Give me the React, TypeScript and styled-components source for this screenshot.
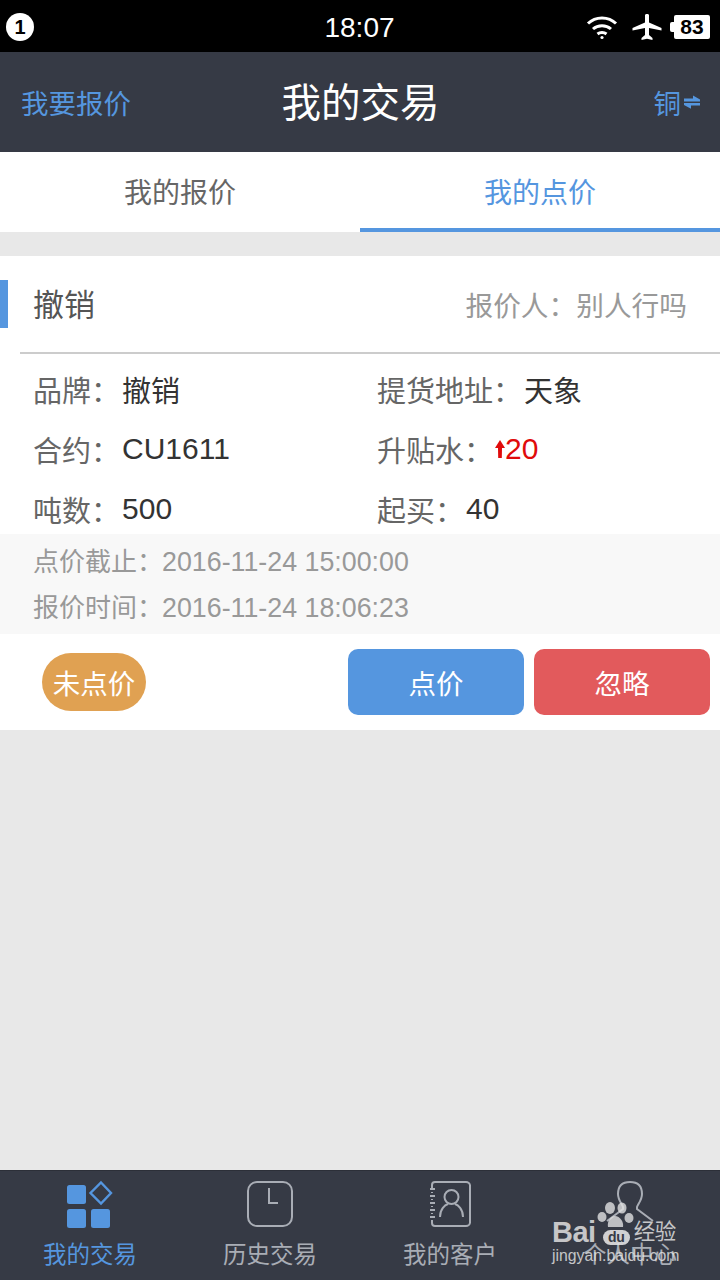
import React from "react";
import styled, { createGlobalStyle } from "styled-components";

const BLUE = "#5596df";
const DARK = "#363a45";

const GlobalStyle = createGlobalStyle`
	html, body {
		margin: 0;
		padding: 0;
		background: #e8e8e8;
		font-family: "Liberation Sans", "Noto Sans CJK SC", sans-serif;
	}
	* {
		box-sizing: border-box;
	}
`;

const Page = styled.div`
	position: relative;
	width: 720px;
	height: 1280px;
	display: flex;
	flex-direction: column;
	overflow: hidden;
	background: #e8e8e8;
`;

const StatusBar = styled.div`
	height: 52px;
	flex: none;
	background: #000;
	color: #fff;
	display: grid;
	grid-template-columns: 1fr auto 1fr;
	align-items: center;
	padding: 0 10px 0 6px;
`;

const Notice = styled.div`
	width: 28px;
	height: 28px;
	border-radius: 50%;
	background: #fff;
	color: #000;
	font-size: 20px;
	font-weight: 700;
	display: flex;
	align-items: center;
	justify-content: center;
`;

const Clock = styled.div`
	font-size: 28px;
	line-height: 52px;
	padding: 2px 0 0 3px;
`;

const StatusIcons = styled.div`
	display: flex;
	align-items: center;
	justify-content: flex-end;
	gap: 8px;
	svg:first-child {
		margin-right: 6px;
	}
`;

const Battery = styled.div`
	position: relative;
	width: 36px;
	height: 24px;
	margin-left: 4px;
	border-radius: 2px;
	background: #fff;
	color: #000;
	font-size: 21px;
	font-weight: 700;
	line-height: 24px;
	text-align: center;
	&::before {
		content: "";
		position: absolute;
		left: -4px;
		top: 7px;
		width: 4px;
		height: 10px;
		background: #fff;
		border-radius: 2px 0 0 2px;
	}
`;

const NavBar = styled.div`
	height: 100px;
	flex: none;
	background: ${DARK};
	display: grid;
	grid-template-columns: 1fr auto 1fr;
	align-items: center;
	padding: 0 20px 0 21px;
`;

const NavLink = styled.div<{ $right?: boolean }>`
	color: ${BLUE};
	font-size: 27.500px;
	display: flex;
	align-items: center;
	gap: 3px;
	justify-content: ${(p) => (p.$right ? "flex-end" : "flex-start")};
`;

const NavTitle = styled.div`
	color: #fff;
	font-size: 39.500px;
	margin-bottom: 5px;
`;

const Tabs = styled.div`
	height: 80px;
	flex: none;
	background: #fff;
	display: flex;
`;

const Tab = styled.div<{ $active?: boolean }>`
	flex: 1;
	display: flex;
	align-items: center;
	justify-content: center;
	padding-top: 2px;
	font-size: 28px;
	color: ${(p) => (p.$active ? BLUE : "#666")};
	border-bottom: 4px solid ${(p) => (p.$active ? BLUE : "transparent")};
`;

const Card = styled.div`
	margin-top: 24px;
	background: #fff;
	display: flex;
	flex-direction: column;
`;

const CardHeader = styled.div`
	height: 96px;
	display: flex;
	align-items: center;
	justify-content: space-between;
	padding-right: 33px;
`;

const HeaderTitle = styled.div`
	height: 48px;
	border-left: 8px solid ${BLUE};
	padding-left: 25px;
	font-size: 31px;
	line-height: 52px;
	color: #555;
`;

const Quoter = styled.div`
	font-size: 27.700px;
	color: #999;
`;

const Divider = styled.div`
	height: 2px;
	margin-left: 20px;
	background: #ccc;
`;

const Fields = styled.div`
	display: grid;
	grid-template-columns: 344px 1fr;
	grid-auto-rows: 60px;
	padding: 5px 0 0 33px;
	height: 180px;
`;

const Field = styled.div`
	display: flex;
	align-items: center;
	font-size: 29px;
	color: #666;
	white-space: pre;
	height: 60px;
`;

const Value = styled.span<{ $red?: boolean; $cjk?: boolean }>`
	color: ${(p) => (p.$red ? "#e00b0b" : "#333")};
	font-size: ${(p) => (p.$cjk ? 29 : 30)}px;
	margin-left: 2px;
	display: inline-flex;
	align-items: center;
`;

const Meta = styled.div`
	height: 100px;
	background: #f8f8f8;
	padding: 5px 33px;
`;

const MetaRow = styled.div`
	height: 46px;
	line-height: 46px;
	font-size: 26px;
	color: #999;
	white-space: pre;
`;

const MetaDate = styled.span`
	font-size: 26.800px;
	margin-left: -1px;
`;

const Actions = styled.div`
	height: 96px;
	display: flex;
	align-items: center;
	padding: 0 10px 0 42px;
`;

const StatusPill = styled.div`
	width: 104px;
	height: 58px;
	border-radius: 29px;
	background: #e0a152;
	color: #fff;
	font-size: 27.500px;
	display: flex;
	align-items: center;
	justify-content: center;
	margin-right: auto;
`;

const ActionButton = styled.div<{ $color: string }>`
	width: 176px;
	height: 66px;
	margin-left: 10px;
	border-radius: 10px;
	background: ${(p) => p.$color};
	color: #fff;
	font-size: 27.500px;
	display: flex;
	align-items: center;
	justify-content: center;
`;

const Spacer = styled.div`
	flex: 1;
`;

const TabBar = styled.div`
	height: 110px;
	flex: none;
	background: ${DARK};
	border-top: 1px solid #2c2f38;
	display: grid;
	grid-template-columns: repeat(4, 180px);
`;

const TabItem = styled.div<{ $active?: boolean }>`
	display: flex;
	flex-direction: column;
	align-items: center;
	padding-top: 9px;
	font-size: 23.500px;
	line-height: 34px;
	color: ${(p) => (p.$active ? BLUE : "#a9adb5")};
	svg {
		display: block;
		height: 50px;
		width: 50px;
		margin-bottom: 8px;
		overflow: visible;
	}
`;

const Watermark = styled.div`
	position: absolute;
	left: 552px;
	top: 1199px;
	width: 130px;
	height: 72px;
	color: rgba(225, 225, 225, 0.85);
	pointer-events: none;
`;

const WatermarkPaw = styled.svg`
	position: absolute;
	left: 45px;
	top: 3px;
	width: 38px;
	height: 27px;
`;

const WatermarkBrand = styled.div`
	position: absolute;
	left: 0;
	top: 18px;
	width: 130px;
	font-size: 29px;
	font-weight: 700;
	line-height: 30px;
	letter-spacing: -0.5px;
	white-space: nowrap;
	display: flex;
	align-items: center;
`;

const WatermarkDu = styled.span`
	width: 27px;
	height: 15px;
	margin: 10px 4px 0 7px;
	border-radius: 8px;
	background: rgba(225, 225, 225, 0.9);
	color: ${DARK};
	font-size: 14px;
	line-height: 14px;
	text-align: center;
`;

const WatermarkCn = styled.span`
	font-size: 21.500px;
	font-weight: 400;
`;

const WatermarkUrl = styled.div`
	position: absolute;
	left: 0;
	top: 48px;
	font-size: 15.800px;
	white-space: nowrap;
`;

function Wifi() {
	return <svg width="32" height="26" viewBox="0 0 32 26" fill="none" stroke="#fff" strokeWidth="3">
		<path d="M2 9.500C9.500 2 22.500 2 30 9.500"/>
		<path d="M7 15C12 10.500 20 10.500 25 15"/>
		<path d="M11.500 20C14 18 18 18 20.500 20"/>
		<circle cx="16" cy="23.500" r="1.600" fill="#fff" stroke="none"/>
	</svg>;
}

function Plane() {
	return <svg width="30" height="28" viewBox="0 0 30 28" fill="#fff">
		<path d="M13 2C13 .5 17 .5 17 2V9.500L29.500 15V17.500L17 15V22L20.500 25V27L15 25.800L9.500 27V25L13 22V15L.5 17.500V15L13 9.500Z"/>
	</svg>;
}

function SwapArrows() {
	return <svg width="16" height="14" viewBox="0 0 16 14" fill={BLUE}>
		<path d="M0 3.500H9V.5L16 4.500V6.500H0Z"/>
		<path d="M16 8H0V10L7 13.800V10.500H16Z"/>
	</svg>;
}

function UpArrow() {
	return <svg width="10" height="20" viewBox="0 0 10 20" fill="#e00b0b">
		<path d="M5 1L10 9H7L6.800 19H3.200L3 9H0Z"/>
	</svg>;
}

function GridIcon() {
	return <svg viewBox="0 0 50 50" fill={BLUE}>
		<rect x="2" y="5" width="19" height="19" rx="2.500"/>
		<rect x="2" y="29" width="19" height="19" rx="2.500"/>
		<rect x="26" y="29" width="19" height="19" rx="2.500"/>
		<path d="M36 2.500L46 13L36 23.500L25.500 13Z" fill="none" stroke={BLUE} strokeWidth="2.400"/>
	</svg>;
}

function ClockIcon() {
	return <svg viewBox="0 0 50 50" fill="none" stroke="#a9adb5" strokeWidth="2">
		<rect x="3" y="2" width="44" height="44" rx="9"/>
		<path d="M24 8V23H33"/>
	</svg>;
}

function ContactsIcon() {
	return <svg viewBox="0 0 50 50" fill="none" stroke="#a9adb5" strokeWidth="2">
		<path d="M7 8V5C7 3 8.500 2 10 2H41C43 2 45 3.500 45 5.500V42.500C45 44.500 43 46 41 46H10C8.500 46 7 45 7 43V40"/>
		<path d="M5 9H10M5 16H10M5 23H10M5 30H10M5 37H10M7 12V13M7 19V20M7 26V27M7 33V34"/>
		<circle cx="26.500" cy="17" r="7"/>
		<path d="M15 37C15 29 20 25 23 24M38 37C38 29 33 25 30 24"/>
	</svg>;
}

function PersonIcon() {
	return <svg viewBox="0 0 50 50" fill="none" stroke="#a9adb5" strokeWidth="2">
		<path d="M13 14C13 5 18 2 25 2C32 2 37 5 37 14C37 20 33 24 32 27V29L48 41M13 14C13 20 17 24 18 27V29L2 41"/>
	</svg>;
}

export default function App() {
	return <>
		<GlobalStyle/>
		<Page>
			<StatusBar>
				<Notice>1</Notice>
				<Clock>18:07</Clock>
				<StatusIcons>
					<Wifi/>
					<Plane/>
					<Battery>83</Battery>
				</StatusIcons>
			</StatusBar>
			<NavBar>
				<NavLink>我要报价</NavLink>
				<NavTitle>我的交易</NavTitle>
				<NavLink $right>铜<SwapArrows/></NavLink>
			</NavBar>
			<Tabs>
				<Tab>我的报价</Tab>
				<Tab $active>我的点价</Tab>
			</Tabs>
			<Card>
				<CardHeader>
					<HeaderTitle>撤销</HeaderTitle>
					<Quoter>报价人：别人行吗</Quoter>
				</CardHeader>
				<Divider/>
				<Fields>
					<Field>品牌：<Value $cjk>撤销</Value></Field>
					<Field>提货地址：<Value $cjk>天象</Value></Field>
					<Field>合约：<Value>CU1611</Value></Field>
					<Field>升贴水：<Value $red><UpArrow/>20</Value></Field>
					<Field>吨数：<Value>500</Value></Field>
					<Field>起买：<Value>40</Value></Field>
				</Fields>
				<Meta>
					<MetaRow>点价截止：<MetaDate>2016-11-24 15:00:00</MetaDate></MetaRow>
					<MetaRow>报价时间：<MetaDate>2016-11-24 18:06:23</MetaDate></MetaRow>
				</Meta>
				<Actions>
					<StatusPill>未点价</StatusPill>
					<ActionButton $color={BLUE}>点价</ActionButton>
					<ActionButton $color="#e25a5c">忽略</ActionButton>
				</Actions>
			</Card>
			<Spacer/>
			<TabBar>
				<TabItem $active><GridIcon/>我的交易</TabItem>
				<TabItem><ClockIcon/>历史交易</TabItem>
				<TabItem><ContactsIcon/>我的客户</TabItem>
				<TabItem><PersonIcon/>个人中心</TabItem>
			</TabBar>
			<Watermark>
				<WatermarkPaw viewBox="0 0 38 27" fill="rgba(225,225,225,0.8)">
					<ellipse cx="5" cy="15" rx="4.500" ry="5"/>
					<ellipse cx="13" cy="6" rx="5" ry="6"/>
					<ellipse cx="25" cy="6" rx="4.500" ry="5.500"/>
					<ellipse cx="32" cy="16" rx="4.500" ry="5"/>
					<path d="M18 14C23 14 27 20 26 25H11C10 20 13 14 18 14Z"/>
				</WatermarkPaw>
				<WatermarkBrand>
					Bai<WatermarkDu>du</WatermarkDu><WatermarkCn>经验</WatermarkCn>
				</WatermarkBrand>
				<WatermarkUrl>jingyan.baidu.com</WatermarkUrl>
			</Watermark>
		</Page>
	</>;
}
